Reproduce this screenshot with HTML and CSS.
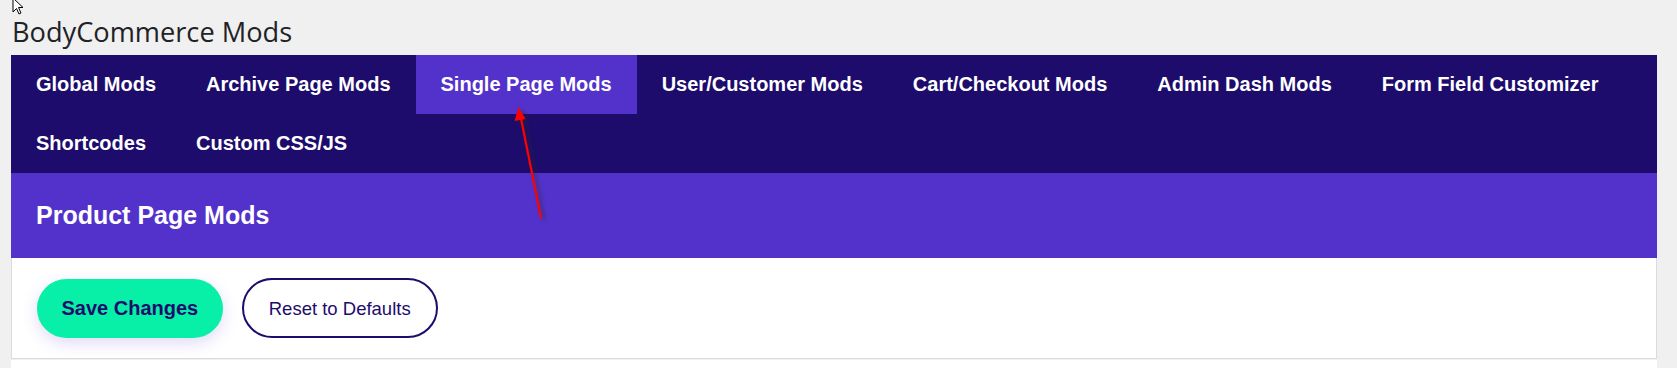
FILE: index.html
```html
<!DOCTYPE html>
<html lang="en">
<head>
    <meta charset="UTF-8">
    <meta name="viewport" content="width=device-width, initial-scale=1.0">
    <title>BodyCommerce Mods</title>
    <link rel="stylesheet" href="styles.css">
</head>
<body>

<svg class="cursor" width="12" height="18" viewBox="0 0 12 18">
    <path d="M1 0 L1 14 L4.5 10.5 L7 16 L9 15 L6.5 9.5 L11 9.5 Z" fill="#fff" stroke="#000" stroke-width="1"/>
</svg>

<div class="wrap">
    <h1 class="page-title">BodyCommerce Mods</h1>

    <nav class="mod-tabs">
        <a href="#" class="tab">Global Mods</a>
        <a href="#" class="tab">Archive Page Mods</a>
        <a href="#" class="tab active">Single Page Mods</a>
        <a href="#" class="tab">User/Customer Mods</a>
        <a href="#" class="tab">Cart/Checkout Mods</a>
        <a href="#" class="tab">Admin Dash Mods</a>
        <a href="#" class="tab">Form Field Customizer</a>
        <a href="#" class="tab">Shortcodes</a>
        <a href="#" class="tab">Custom CSS/JS</a>
    </nav>

    <div class="section-head">
        <h2>Product Page Mods</h2>
    </div>

    <div class="section-body">
        <button class="btn save">Save Changes</button>
        <button class="btn reset">Reset to Defaults</button>
    </div>

    <div class="next-section"></div>
</div>

<!-- annotation arrow from the screenshot -->
<svg class="annotation" width="60" height="140" viewBox="0 0 60 140">
    <line x1="38" y1="118" x2="17.5" y2="16" stroke="#ff0000" stroke-width="2.2"/>
    <polygon points="15.5,7 11.5,21 22.5,19" fill="#ff0000"/>
</svg>

</body>
</html>
```

FILE: styles.css
```css
body {
    font-family: "Liberation Sans", Arial, sans-serif;
    margin: 0;
    padding: 0;
    background-color: #f0f0f0;
}

.wrap {
    padding: 0 20px 0 11px;
}

.page-title {
    font-family: "Open Sans", "Noto Sans", sans-serif;
    font-weight: 400;
    font-size: 27.2px;
    line-height: 36px;
    color: #1d2327;
    margin: 0;
    padding: 14px 0 5px 1px;
}

.mod-tabs {
    display: flex;
    flex-wrap: wrap;
    background-color: #1d0c6c;
}

.mod-tabs .tab {
    padding: 18px 25px;
    font-size: 20px;
    line-height: 23px;
    font-weight: bold;
    color: #fff;
    text-decoration: none;
}

.mod-tabs .tab.active {
    background-color: #5332cb;
}

.section-head {
    background-color: #5332cb;
    padding: 28px 25px;
}

.section-head h2 {
    margin: 0;
    font-size: 25px;
    line-height: 29px;
    color: #fff;
}

.section-body {
    display: flex;
    align-items: center;
    gap: 19px;
    background-color: #fff;
    border: 1px solid #dcdcde;
    border-top: none;
    padding: 20px 25px;
}

.btn {
    font-family: "Liberation Sans", Arial, sans-serif;
    border-radius: 30px;
    padding: 16px 25px;
    line-height: 23px;
    cursor: pointer;
    color: #1d0c6c;
}

.btn.save {
    background-color: #08f0a7;
    border: 2px solid #08f0a7;
    font-size: 20px;
    font-weight: bold;
    padding: 16px 22.5px;
    box-shadow: 0 5px 16px rgba(83, 50, 203, 0.18);
}

.btn.reset {
    background-color: #fff;
    border: 2px solid #1d0c6c;
    font-size: 18.5px;
    padding: 16.5px 25px;
}

.next-section {
    background-color: #fff;
    height: 10px;
    margin-top: 1px;
}

.cursor {
    position: absolute;
    left: 12px;
    top: -2px;
}

.annotation {
    position: absolute;
    left: 503px;
    top: 100px;
    filter: drop-shadow(3px 2px 2px rgba(40, 40, 40, 0.6));
}
```
